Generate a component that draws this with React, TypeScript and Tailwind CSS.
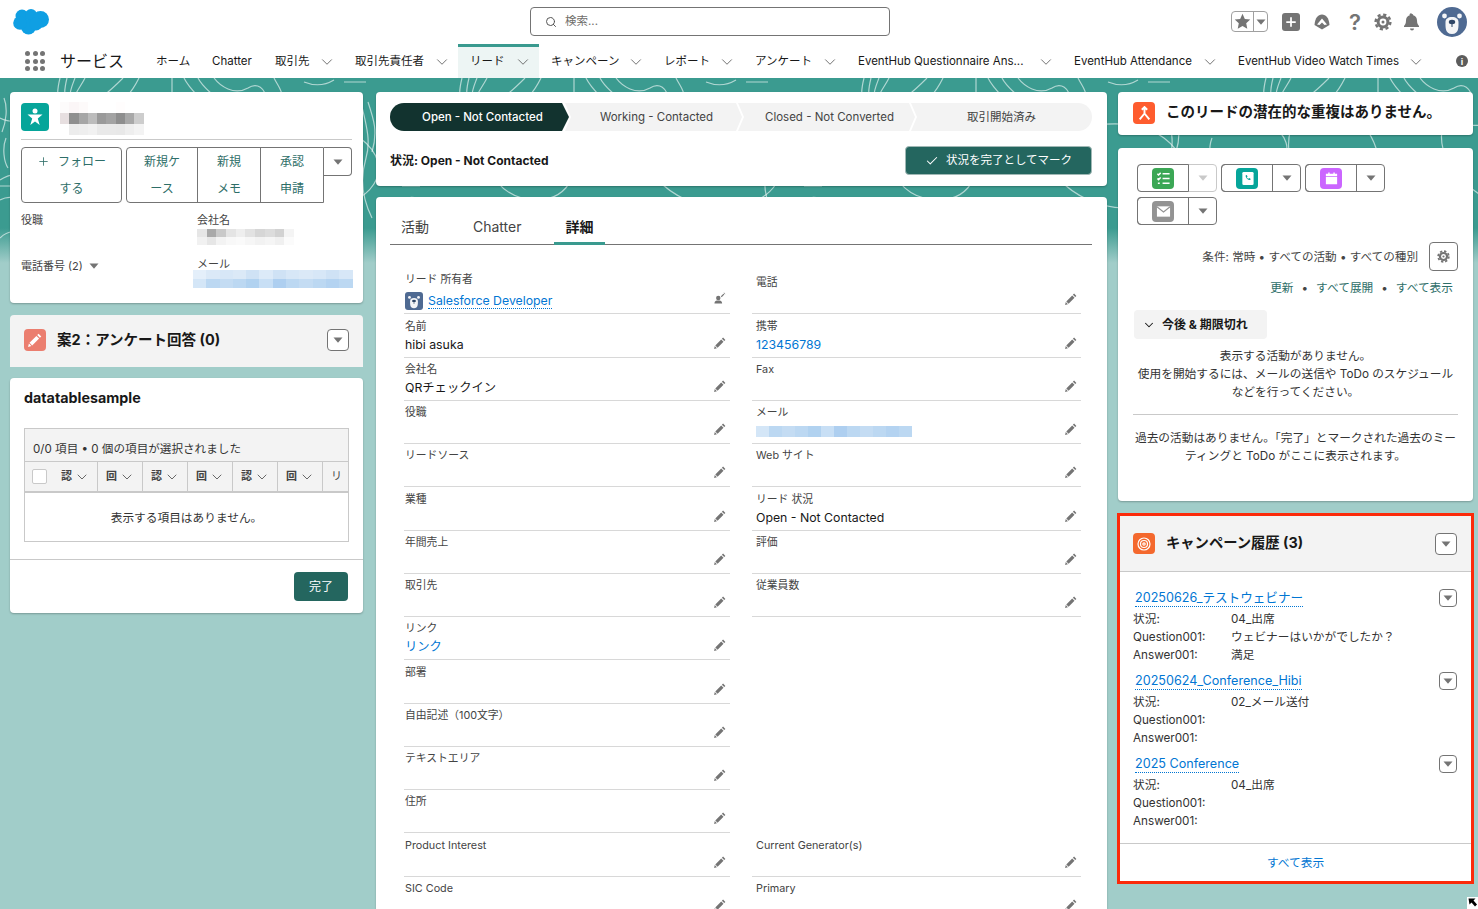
import { Check, ChevronDown, Plus, Search } from "lucide-react";
import type { ReactNode } from "react";

const navItems = [
  { label: "ホーム", w: "w-[56px]" },
  { label: "Chatter", w: "w-[63px]" },
  { label: "取引先", w: "w-[80px]", chev: true },
  { label: "取引先責任者", w: "w-[115px]", chev: true },
  { label: "リード", w: "w-[81px]", chev: true, active: true },
  { label: "キャンペーン", w: "w-[113px]", chev: true },
  { label: "レポート", w: "w-[91px]", chev: true },
  { label: "アンケート", w: "w-[103px]", chev: true },
  { label: "EventHub Questionnaire Ans...", w: "w-[216px]", chev: true },
  { label: "EventHub Attendance", w: "w-[164px]", chev: true },
  { label: "EventHub Video Watch Times", w: "w-[206px]", chev: true },
];

type Cell = { label: string; value?: string; link?: boolean; owner?: boolean; blur?: boolean };

const detailRows: [Cell, Cell | null][] = [
  [{ label: "リード 所有者", owner: true, value: "Salesforce Developer" }, { label: "電話" }],
  [{ label: "名前", value: "hibi asuka" }, { label: "携帯", value: "123456789", link: true }],
  [{ label: "会社名", value: "QRチェックイン" }, { label: "Fax" }],
  [{ label: "役職" }, { label: "メール", blur: true }],
  [{ label: "リードソース" }, { label: "Web サイト" }],
  [{ label: "業種" }, { label: "リード 状況", value: "Open - Not Contacted" }],
  [{ label: "年間売上" }, { label: "評価" }],
  [{ label: "取引先" }, { label: "従業員数" }],
  [{ label: "リンク", value: "リンク", link: true }, null],
  [{ label: "部署" }, null],
  [{ label: "自由記述（100文字）" }, null],
  [{ label: "テキストエリア" }, null],
  [{ label: "住所" }, null],
  [{ label: "Product Interest" }, { label: "Current Generator(s)" }],
  [{ label: "SIC Code" }, { label: "Primary" }],
];

const campaigns = [
  { name: "20250626_テストウェビナー", status: "04_出席", question: "ウェビナーはいかがでしたか？", answer: "満足" },
  { name: "20250624_Conference_Hibi", status: "02_メール送付", question: "", answer: "" },
  { name: "2025 Conference", status: "04_出席", question: "", answer: "" },
];

const titleBlur = [
  ["#fdfbfb", "#fbf6f7", "#fdfafa", "#ffffff", "#ffffff", "#ffffff", "#fffdfd", "#ffffff", "#ffffff"],
  ["#e7dfe0", "#8f8f8f", "#a6a6a6", "#bcbcbc", "#9a9a9a", "#a3a3a3", "#8e8e8e", "#a8a8a8", "#cdcdcd"],
  ["#ffffff", "#ececec", "#eeeeee", "#f1f1f1", "#e9e9e9", "#e9e9e9", "#e8e8e8", "#eeeeee", "#f3f3f3"],
];
const companyBlur = [
  ["#e6e6e6", "#a9a9a9", "#c9c9c9", "#e4e4e4", "#eeeeee", "#e2e2e2", "#d6d6d6", "#dcdcdc", "#d2d2d2", "#f4f4f4"],
  ["#f1f1f1", "#e6e6e6", "#f3f3f3", "#f8f8f8", "#fafafa", "#f6f6f6", "#f2f2f2", "#f5f5f5", "#f0f0f0", "#fbfbfb"],
];
const mailBlur = [
  ["#e4effa", "#dbe9f7", "#d7e7f7", "#dbe9f7", "#cfe2f5", "#dceaf8", "#cfe2f5", "#d7e7f7", "#dbe9f7", "#d7e7f7", "#cfe2f5", "#d7e7f7"],
  ["#d4e6f7", "#bcd8f2", "#c4dcf3", "#bcd8f2", "#b1d2f0", "#c8dff5", "#aecff0", "#bcd8f2", "#c4dcf3", "#bcd8f2", "#b4d3f1", "#bcd8f2"],
];

function PixelBlur({ rows, cell }: { rows: string[][]; cell: string }) {
  return (
    <div className="flex flex-col blur-[0.6px]">
      {rows.map((r, i) => (
        <div key={i} className="flex">
          {r.map((c, j) => (
            <div key={j} className={cell} style={{ backgroundColor: c }} />
          ))}
        </div>
      ))}
    </div>
  );
}

function Caret({ className = "fill-[#747474]" }: { className?: string }) {
  return (
    <svg viewBox="0 0 10 6" className={"h-[6px] w-[10px] " + className}>
      <path d="M0.5 0.5h9L5 5.8z" />
    </svg>
  );
}

function PencilIcon() {
  return (
    <svg viewBox="0 0 14 14" className="h-[12px] w-[12px] shrink-0 fill-[#747474]">
      <path d="M10.6 0.7l2.7 2.7-1.4 1.4-2.7-2.7zM8.4 2.9l2.7 2.7-6.9 6.9-2.7-2.7zM0.9 10.6l2.5 2.5-3.3 0.8z" />
    </svg>
  );
}

function Gear({ className, hole = "#ffffff" }: { className: string; hole?: string }) {
  return (
    <svg viewBox="0 0 18 18" className={className}>
      <circle cx="9" cy="9" r="6.4" fill="#747474" />
      <circle cx="9" cy="9" r="7.4" fill="none" stroke="#747474" strokeWidth="2.4" strokeDasharray="3.2 2.6" />
      <circle cx="9" cy="9" r="3.4" fill={hole} />
      <circle cx="9" cy="9" r="1.5" fill="#747474" />
    </svg>
  );
}

function CaretButton({ size = "h-[22px] w-[22px]" }: { size?: string }) {
  return (
    <div className={"flex items-center justify-center rounded-[4px] border border-[#747474] bg-white " + size}>
      <Caret />
    </div>
  );
}

function Bear({ className, square }: { className: string; square?: boolean }) {
  return (
    <svg viewBox="0 0 30 30" className={className}>
      {square ? <rect width="30" height="30" rx="5" fill="#4f6a92" /> : <circle cx="15" cy="15" r="15" fill="#4f6a92" />}
      <circle cx="7.5" cy="9" r="2.4" fill="#f4f5f7" />
      <circle cx="22.5" cy="9" r="2.4" fill="#f4f5f7" />
      <path d="M8.5 15c0-3 2.5-5 6.5-5s6.5 2 6.5 5c0 5 .5 12-6.5 12s-6.5-7-6.5-12z" fill="#f4f5f7" />
      <ellipse cx="15" cy="15" rx="3.2" ry="2.2" fill="#2f4666" />
      <path d="M15 17v3" stroke="#2f4666" strokeWidth="1" />
    </svg>
  );
}

function ActionGroup({ color, disabled, children }: { color: string; disabled?: boolean; children: ReactNode }) {
  return (
    <div className={"flex h-[28px] w-[80px] rounded-[4px] border bg-white " + (disabled ? "border-[#c9c9c9]" : "border-[#747474]")}>
      <div className="-my-px -ml-px flex w-[52px] items-center justify-center rounded-l-[4px] border border-[#747474]">
        <div className={"flex h-[21px] w-[22px] items-center justify-center rounded-[4px] " + color}>{children}</div>
      </div>
      <div className="flex flex-1 items-center justify-center">
        <Caret className={disabled ? "fill-[#c9c9c9]" : "fill-[#747474]"} />
      </div>
    </div>
  );
}

function DetailCell({ cell, right }: { cell: Cell; right?: boolean }) {
  return (
    <div className={"flex h-[43.28px] items-end justify-between border-b border-[#d8d8d8] pb-[3px] pr-[4px] " + (right ? "pl-[4px]" : "pl-[1px]")}>
      <div className="flex min-w-0 flex-col">
        <div className="text-[10.8px] leading-[14px] text-[#444444]">{cell.label}</div>
        <div className={"flex h-[18px] items-center text-[12.3px] leading-[18px] text-[#181818] " + (cell.owner ? "mt-[5px]" : "mt-[2px]")}>
          {cell.owner ? (
            <>
              <Bear square className="mr-[5px] h-[18px] w-[18px]" />
              <span className="border-b border-dotted border-[#0176d3] leading-[14px] text-[#0176d3]">{cell.value}</span>
            </>
          ) : cell.blur ? (
            <PixelBlur rows={[mailBlur[1]]} cell="h-[11px] w-[13px]" />
          ) : cell.link ? (
            <span className="text-[#0176d3]">{cell.value}</span>
          ) : (
            cell.value
          )}
        </div>
      </div>
      {cell.owner ? (
        <svg viewBox="0 0 14 14" className="mb-[6px] h-[12px] w-[12px] shrink-0 fill-[#747474]">
          <circle cx="5" cy="7" r="2.6" />
          <path d="M0.5 13.5c0-3 2-3.6 4.5-3.6s4.5 0.6 4.5 3.6zM8 5l3-3 1 1-3 3zM11 1l1 0 1 1 0 1z" />
        </svg>
      ) : (
        <div className="mb-[5px]">
          <PencilIcon />
        </div>
      )}
    </div>
  );
}

function Header() {
  return (
    <header className="bg-white">
      <div className="flex h-[44px] items-center pb-[1px] pl-[13px] pr-[11px]">
        <svg viewBox="0 0 36 27" className="h-[27px] w-[36px] fill-[#0f9fe3]">
          <circle cx="9" cy="8" r="6.5" />
          <circle cx="18" cy="7" r="6" />
          <circle cx="27.5" cy="11.5" r="8.5" />
          <circle cx="15.5" cy="19" r="7.5" />
          <circle cx="7" cy="15" r="6.8" />
          <circle cx="23" cy="16" r="6.5" />
        </svg>
        <div className="ml-[481px] flex h-[29px] w-[360px] items-center rounded-[4px] border border-[#747474] pl-[14px]">
          <Search className="h-[12px] w-[12px] text-[#555555]" strokeWidth={2} />
          <span className="ml-[8px] pt-[1px] text-[11.5px] text-[#706e6b]">検索...</span>
        </div>
        <div className="ml-auto flex items-center">
          <div className="flex h-[21px] w-[37px] rounded-[4px] border border-[#a0a0a0]">
            <div className="flex w-[22px] items-center justify-center border-r border-[#a0a0a0]">
              <svg viewBox="0 0 16 16" className="h-[17px] w-[17px] fill-[#747474]">
                <path d="M8 0.8l2.2 4.8 5.1 0.6-3.8 3.5 1 5.2L8 12.3l-4.5 2.6 1-5.2L0.7 6.2l5.1-0.6z" />
              </svg>
            </div>
            <div className="flex flex-1 items-center justify-center">
              <Caret />
            </div>
          </div>
          <div className="ml-[14px] flex h-[18px] w-[18px] items-center justify-center rounded-[3px] bg-[#747474]">
            <Plus className="h-[14px] w-[14px] text-white" strokeWidth={3} />
          </div>
          <svg viewBox="0 0 18 18" className="ml-[13px] h-[18px] w-[18px]">
            <path d="M9 1.5c4 0 7 3.5 7.5 10.5L9 16.5 1.5 12C2 5 5 1.5 9 1.5z" fill="#747474" />
            <path d="M4 11.5L9 5.5l5 6-2.5.5L9 9.5 6.5 12z" fill="#ffffff" />
          </svg>
          <span className="ml-[18px] w-[12px] text-center text-[22px] font-semibold leading-[20px] text-[#747474]">?</span>
          <Gear className="ml-[13px] h-[18px] w-[18px]" />
          <svg viewBox="0 0 18 18" className="ml-[11px] h-[18px] w-[18px] fill-[#747474]">
            <path d="M9 1a1.2 1.2 0 0 1 1.2 1.3c2.6.6 3.8 2.7 3.8 5.2 0 3.3 1 4.3 2 5.5v1H1v-1c1-1.2 2-2.2 2-5.5 0-2.5 1.2-4.6 3.8-5.2A1.2 1.2 0 0 1 9 1zM7 15.5h4a2 2 0 0 1-4 0z" />
          </svg>
          <Bear className="ml-[16px] h-[30px] w-[30px]" />
        </div>
      </div>
      <nav className="flex h-[34px] items-center pl-[25px] pr-[10px]">
        <div className="grid grid-cols-3 gap-[2.5px]">
          {Array.from({ length: 9 }).map((_, i) => (
            <div key={i} className="h-[5px] w-[5px] rounded-full bg-[#747474]" />
          ))}
        </div>
        <span className="ml-[15px] w-[84px] text-[16px] leading-[24px] text-[#181818]">サービス</span>
        {navItems.map((item) => (
          <div
            key={item.label}
            className={
              "flex h-[34px] items-center justify-between pl-[12px] pr-[7px] text-[11.5px] text-[#181818] " +
              item.w +
              (item.active ? " border-t-[3px] border-[#3a9a8f] bg-[#edf5f4] pb-[1px]" : " pt-[2px]")
            }
          >
            <span className="whitespace-nowrap">{item.label}</span>
            {item.chev && <ChevronDown className="h-[18px] w-[18px] text-[#555555]" strokeWidth={1.1} />}
          </div>
        ))}
        <div className="ml-auto flex h-[12px] w-[12px] items-center justify-center rounded-full bg-[#5c5c5c] text-[9px] font-bold leading-none text-white">
          i
        </div>
      </nav>
    </header>
  );
}

function BackgroundPattern() {
  return (
    <svg viewBox="0 0 1478 175" className="absolute left-0 top-0 z-0 h-[175px] w-[1478px]" aria-hidden>
      {[0, 402, 804, 1206].map((x) => (
        <g key={x} transform={`translate(${x} 0)`} fill="none" stroke="#ffffff" strokeOpacity="0.6" strokeWidth="1.2">
          <path d="M60 0c-2 8-3 12-2 18M67 0c-2 8-3 12-2 18M75 0c-3 8-5 12-5 18M85 0c-4 8-8 12-10 18M103 18c8-6 14-12 20-18M127 18c6-6 9-12 12-18M172 0v14M184 0c4 8 8 12 14 18M198 0c4 8 10 12 16 18M214 0c6 8 20 18 34 10c6-4 14-4 18 8M274 0c4 8 8 12 8 18M304 4c10 4 20 4 30-2M344 4h22" />
          <path d="M0 40c20 10 40-6 60 4s30 30 10 44-50 0-70 14M100 30c30-10 60 10 70 40s-10 60-50 50-50-70-20-90M240 40c30 20 80-10 120 20s10 70-40 70-100-50-80-90M20 140c30-10 60 0 80 30M180 130c20 10 40 20 50 45" />
          <path d="M360 20c4 20 12 40 6 60s-4 40 6 60M368 24c6 18 10 30 4 50M0 108h18M0 122c8-4 14-4 20 2" />
          <path d="M4 20c4 10 2 24-2 34M6 60c-4 10-2 24 2 30M0 160c8-8 18-8 24-2" />
        </g>
      ))}
    </svg>
  );
}

function LeftColumn() {
  return (
    <div className="flex w-[353px] shrink-0 flex-col">
      <section className="h-[211px] rounded-[4px] bg-white px-[11px] pt-[11px] shadow-[0_1px_2px_rgba(0,0,0,0.25)]">
        <div className="flex h-[37px] border-b border-[#c9c9c9]">
          <div className="flex h-[28px] w-[28px] items-center justify-center rounded-[4px] bg-[#06a59a]">
            <svg viewBox="0 0 20 20" className="h-[20px] w-[20px] fill-white">
              <circle cx="10" cy="4" r="2.5" />
              <path d="M2.5 7.5h15l-4.7 4 1.9 6.5L10 14.5 5.3 18l1.9-6.5z" />
            </svg>
          </div>
          <div className="ml-[11px] mt-[-1px]">
            <PixelBlur rows={titleBlur} cell="h-[11px] w-[9.3px]" />
          </div>
        </div>
        <div className="mt-[7px] flex h-[56px] items-start text-[12px] text-[#2e6e68]">
          <div className="flex h-[56px] w-[101px] flex-col items-center rounded-[4px] border border-[#747474] leading-[27px]">
            <span className="flex items-center">
              <Plus className="mr-[8px] h-[13px] w-[13px]" strokeWidth={1.5} />
              フォロー
            </span>
            <span>する</span>
          </div>
          <div className="ml-[4px] flex h-[56px] w-[198px] rounded-l-[4px] border border-[#747474] text-center leading-[27px]">
            <div className="w-[71px] border-r border-[#747474]">新規ケ<br />ース</div>
            <div className="w-[63px] border-r border-[#747474]">新規<br />メモ</div>
            <div className="flex-1">承認<br />申請</div>
          </div>
          <div className="flex h-[29px] w-[28px] items-center justify-center rounded-r-[4px] border border-l-0 border-[#747474]">
            <Caret />
          </div>
        </div>
        <div className="mt-[10px] grid grid-cols-[176px_1fr] text-[11px] leading-[14px] text-[#444444]">
          <div className="h-[43px]">役職</div>
          <div className="h-[43px]">
            会社名
            <div className="mt-[2px]">
              <PixelBlur rows={companyBlur} cell="h-[8px] w-[9.7px]" />
            </div>
          </div>
          <div className="flex items-start pt-[3px]">
            電話番号 (2)
            <span className="ml-[6px] mt-[4px] inline-flex"><Caret /></span>
          </div>
          <div className="relative h-[32px] pt-[1px]">
            メール
            <div className="absolute left-[-4px] top-[14px]">
              <PixelBlur rows={mailBlur} cell="h-[9px] w-[13.3px]" />
            </div>
          </div>
        </div>
      </section>

      <section className="mt-[12px] flex h-[52px] items-center rounded-t-[4px] bg-[#f3f3f3] pb-[2px] pl-[14px] pr-[14px]">
        <div className="flex h-[22px] w-[22px] items-center justify-center rounded-[4px] bg-[#eb7e6f]">
          <svg viewBox="0 0 14 14" className="h-[14px] w-[14px] fill-white">
            <path d="M10.6 0.7l2.7 2.7-1.4 1.4-2.7-2.7zM8.4 2.9l2.7 2.7-6.9 6.9-2.7-2.7zM0.9 10.6l2.5 2.5-3.3 0.8z" />
          </svg>
        </div>
        <h2 className="ml-[11px] text-[14.5px] font-bold text-[#181818]">案2：アンケート回答 (0)</h2>
        <div className="ml-auto">
          <CaretButton />
        </div>
      </section>

      <section className="mt-[11px] h-[235px] rounded-[4px] bg-white shadow-[0_1px_2px_rgba(0,0,0,0.25)]">
        <h2 className="px-[14px] pt-[10px] text-[14.3px] font-bold leading-[20px] text-[#181818]">datatablesample</h2>
        <div className="mx-[14px] mt-[20px] h-[114px] border border-[#c9c9c9]">
          <div className="h-[32px] bg-[#f3f3f3] pl-[8px] pt-[12px] text-[11.6px] leading-[16px] text-[#333333]">
            0/0 項目 • 0 個の項目が選択されました
          </div>
          <div className="flex h-[32px] items-center overflow-hidden border-t border-b-2 border-[#c9c9c9] bg-[#f3f3f3] text-[11px] text-[#444444]">
            <div className="flex h-[29px] w-[73px] shrink-0 items-center border-r border-[#c9c9c9] pl-[7px]">
              <div className="h-[15px] w-[15px] rounded-[2px] border border-[#c9c9c9] bg-white" />
              <span className="ml-[14px] font-bold">認</span>
              <ChevronDown className="ml-[2px] h-[16px] w-[16px]" strokeWidth={1.2} />
            </div>
            {["回", "認", "回", "認", "回"].map((g, i) => (
              <div key={i} className="flex h-[29px] w-[45px] shrink-0 items-center border-r border-[#c9c9c9] pl-[8px]">
                <span className="font-bold">{g}</span>
                <ChevronDown className="ml-[2px] h-[16px] w-[16px]" strokeWidth={1.2} />
              </div>
            ))}
            <span className="ml-[8px] whitespace-nowrap">リ</span>
          </div>
          <div className="flex h-[48px] items-center justify-center pt-[4px] text-[11.7px] text-[#333333]">表示する項目はありません。</div>
        </div>
        <div className="mt-[17px] flex h-[54px] justify-end border-t border-[#c9c9c9] pr-[15px] pt-[12px]">
          <div className="flex h-[29px] w-[54px] items-center justify-center rounded-[4px] bg-[#24665f] text-[12px] text-white">完了</div>
        </div>
      </section>
    </div>
  );
}

function CenterColumn() {
  const stages = ["Working - Contacted", "Closed - Not Converted", "取引開始済み"];
  return (
    <div className="flex w-[731px] shrink-0 flex-col gap-[11px]">
      <section className="h-[94px] rounded-[4px] bg-white pl-[14px] pr-[15px] pt-[11px] shadow-[0_1px_2px_rgba(0,0,0,0.25)]">
        <div className="flex h-[28px] text-[11.5px]">
          <div className="flex w-[179px] items-center justify-center rounded-l-full bg-[#12332f] pl-[6px] pt-[2px] font-medium text-white [clip-path:polygon(0_0,172px_0,100%_50%,172px_100%,0_100%)]">
            Open - Not Contacted
          </div>
          {stages.map((s, i) => (
            <div
              key={s}
              className={
                "-ml-[4px] flex items-center justify-center bg-[#f3f3f3] pt-[2px] text-[#444444] " +
                (i === 2
                  ? "flex-1 rounded-r-full [clip-path:polygon(0_0,100%_0,100%_100%,0_100%,6px_50%)]"
                  : "w-[177px] pl-[6px] [clip-path:polygon(0_0,171px_0,100%_50%,171px_100%,0_100%,6px_50%)]")
              }
            >
              {s}
            </div>
          ))}
        </div>
        <div className="mt-[15px] flex items-center justify-between">
          <span className="text-[12px] font-bold text-[#181818]">状況: Open - Not Contacted</span>
          <div className="flex h-[29px] w-[187px] items-center justify-center rounded-[4px] border border-[#a0b8b5] bg-[#24665f] pt-[1px] text-[11.5px] text-white">
            <Check className="mr-[7px] h-[14px] w-[14px]" strokeWidth={1.8} />
            状況を完了としてマーク
          </div>
        </div>
      </section>

      <section className="min-h-0 flex-1 rounded-t-[4px] bg-white pl-[14px] pr-[15px] pt-[10px] shadow-[0_1px_2px_rgba(0,0,0,0.25)]">
        <div className="flex h-[38px] border-b border-[#747474] text-[14px] text-[#444444]">
          <div className="ml-[11px] pt-[9px]">活動</div>
          <div className="ml-[44px] pt-[9px]">Chatter</div>
          <div className="relative ml-[44px] pt-[9px] font-bold text-[#181818]">
            詳細
            <div className="absolute bottom-[-1px] left-[-11px] h-[3px] w-[51px] bg-[#3a9a8f]" />
          </div>
        </div>
        <div className="ml-[14px] mt-[26px] grid grid-cols-[326px_329px] gap-x-[22px]">
          {detailRows.map(([l, r]) => (
            <div key={l.label} className="contents">
              <DetailCell cell={l} />
              {r ? <DetailCell cell={r} right /> : <div />}
            </div>
          ))}
        </div>
      </section>
    </div>
  );
}

function RightColumn() {
  return (
    <div className="flex w-[355px] shrink-0 flex-col">
      <section className="flex h-[43px] items-center rounded-[4px] bg-white pb-[1px] pl-[15px] shadow-[0_1px_2px_rgba(0,0,0,0.25)]">
        <div className="flex h-[22px] w-[22px] items-center justify-center rounded-[4px] bg-[#fe5c2e]">
          <svg viewBox="0 0 14 14" className="h-[15px] w-[15px] fill-none stroke-white" strokeWidth="1.8">
            <path d="M7 1v6M4.5 3.5L7 1l2.5 2.5M7 7L2.5 12.5M7 7l4.5 5.5" />
          </svg>
        </div>
        <h2 className="ml-[11px] pb-[2px] text-[14.5px] font-bold text-[#181818]">このリードの潜在的な重複はありません。</h2>
      </section>

      <section className="mt-[13px] h-[353px] rounded-[4px] bg-white shadow-[0_1px_2px_rgba(0,0,0,0.25)]">
        <div className="flex flex-wrap gap-x-[4px] gap-y-[5px] pl-[19px] pr-[80px] pt-[16px]">
          <ActionGroup color="bg-[#3ba755]" disabled>
            <svg viewBox="0 0 16 16" className="h-[15px] w-[15px] stroke-white" fill="none" strokeWidth="1.6">
              <path d="M1.5 3l1.2 1.2L5 2M7 3h7.5M1.5 8l1.2 1.2L5 7M7 8h7.5M2 13h2M7 13h7.5" />
            </svg>
          </ActionGroup>
          <ActionGroup color="bg-[#06a59a]">
            <svg viewBox="0 0 16 16" className="h-[15px] w-[15px]">
              <rect x="2.5" y="1" width="12" height="14" rx="1.5" fill="#ffffff" />
              <path d="M6 5c0-.6.8-1 1.3-.6l.8 1.4-.8.9c.3.8.8 1.3 1.6 1.6l.9-.8 1.4.8c.4.5 0 1.3-.6 1.3C8.5 9.6 6 7.3 6 5z" fill="#06a59a" />
            </svg>
          </ActionGroup>
          <ActionGroup color="bg-[#cb65ff]">
            <svg viewBox="0 0 16 16" className="h-[15px] w-[15px] fill-white">
              <path d="M2 3h2.5V1.5H6V3h4V1.5h1.5V3H14v2.500H2zM2 6.500h12V14H2z" />
            </svg>
          </ActionGroup>
          <ActionGroup color="bg-[#939393]">
            <svg viewBox="0 0 16 16" className="h-[15px] w-[15px]">
              <rect x="1" y="2.5" width="14" height="11" fill="#ffffff" />
              <path d="M1 3l7 5.5L15 3" fill="none" stroke="#939393" strokeWidth="1.2" />
            </svg>
          </ActionGroup>
        </div>
        <div className="mt-[17px] flex items-center justify-end pr-[15px]">
          <span className="pt-[3px] text-[11.6px] text-[#444444]">条件: 常時 • すべての活動 • すべての種別</span>
          <div className="ml-[11px] flex h-[29px] w-[29px] items-center justify-center rounded-[4px] border border-[#747474]">
            <Gear className="h-[13px] w-[13px]" />
          </div>
        </div>
        <div className="mt-[9px] flex justify-end pr-[20px] text-[11.7px] leading-[16px] text-[#2e6e68]">
          <span>更新</span>
          <span className="mx-[8px] text-[#444444]">•</span>
          <span>すべて展開</span>
          <span className="mx-[8px] text-[#444444]">•</span>
          <span>すべて表示</span>
        </div>
        <div className="ml-[16px] mt-[14px] flex h-[29px] w-[133px] items-center rounded-[4px] bg-[#f3f3f3] pl-[8px] text-[12px] font-bold text-[#181818]">
          <ChevronDown className="mr-[6px] h-[14px] w-[14px]" strokeWidth={1.8} />
          今後 & 期限切れ
        </div>
        <div className="mx-[15px] border-b border-[#c9c9c9] pb-[13px] pt-[8px] text-center text-[11.7px] leading-[18px] text-[#333333]">
          表示する活動がありません。
          <br />
          使用を開始するには、メールの送信や ToDo のスケジュール
          <br />
          などを行ってください。
        </div>
        <div className="mx-[15px] pt-[14px] text-center text-[11.7px] leading-[18px] text-[#333333]">
          過去の活動はありません。「完了」とマークされた過去のミー
          <br />
          ティングと ToDo がここに表示されます。
        </div>
      </section>

      <section className="-mx-[1px] mt-[12px] h-[371px] border-[3px] border-[#fb2a0a] bg-white">
        <div className="flex h-[56px] items-center border-b border-[#c9c9c9] bg-[#f3f3f3] pl-[13px] pr-[14px]">
          <div className="flex h-[21px] w-[22px] items-center justify-center rounded-[4px] bg-[#f4682d]">
            <svg viewBox="0 0 14 14" className="h-[14px] w-[14px] fill-none stroke-white" strokeWidth="1.2">
              <circle cx="7" cy="7" r="6" />
              <circle cx="7" cy="7" r="3.5" />
              <circle cx="7" cy="7" r="1.2" />
            </svg>
          </div>
          <h2 className="ml-[11px] pb-[2px] text-[14.3px] font-bold text-[#181818]">キャンペーン履歴 (3)</h2>
          <div className="ml-auto">
            <CaretButton />
          </div>
        </div>
        <div className="pl-[13px] pr-[14px] pt-[17px]">
          {campaigns.map((c) => (
            <div key={c.name} className="h-[83px]">
              <div className="flex items-start justify-between">
                <span className="ml-[2px] border-b border-dotted border-[#0176d3] text-[12.6px] leading-[17px] text-[#0176d3]">{c.name}</span>
                <CaretButton size="h-[18px] w-[18px]" />
              </div>
              <div className="mt-[4px] grid grid-cols-[98px_1fr] text-[11.7px] leading-[17.9px] text-[#333333]">
                <span>状況:</span>
                <span>{c.status}</span>
                <span>Question001:</span>
                <span>{c.question}</span>
                <span>Answer001:</span>
                <span>{c.answer}</span>
              </div>
            </div>
          ))}
        </div>
        <div className="mt-[5px] flex h-[39px] items-center justify-center border-t border-[#c9c9c9] pt-[2px] text-[11.7px] text-[#0176d3]">すべて表示</div>
      </section>
    </div>
  );
}

export default function App() {
  return (
    <div className="relative h-[909px] w-full overflow-hidden bg-white font-['Inter','Noto_Sans_CJK_JP',sans-serif]">
      <Header />
      <main className="relative h-[831px] bg-[linear-gradient(#3b9b90_0,#3b9b90_150px,#a1cdc9_185px)]">
        <BackgroundPattern />
        <div className="relative z-10 flex h-[831px] gap-[13px] pl-[10px] pt-[14px]">
          <LeftColumn />
          <CenterColumn />
          <div className="-ml-[2px]">
            <RightColumn />
          </div>
        </div>
      </main>
      <svg viewBox="0 0 11 12" className="absolute bottom-0 right-0 h-[12px] w-[11px]">
        <rect width="11" height="12" fill="#ffffff" />
        <path d="M1.5 1.5h7L6.5 3.5l3.5 4-2 2-3.5-4-2 2z" fill="#000000" />
      </svg>
    </div>
  );
}
